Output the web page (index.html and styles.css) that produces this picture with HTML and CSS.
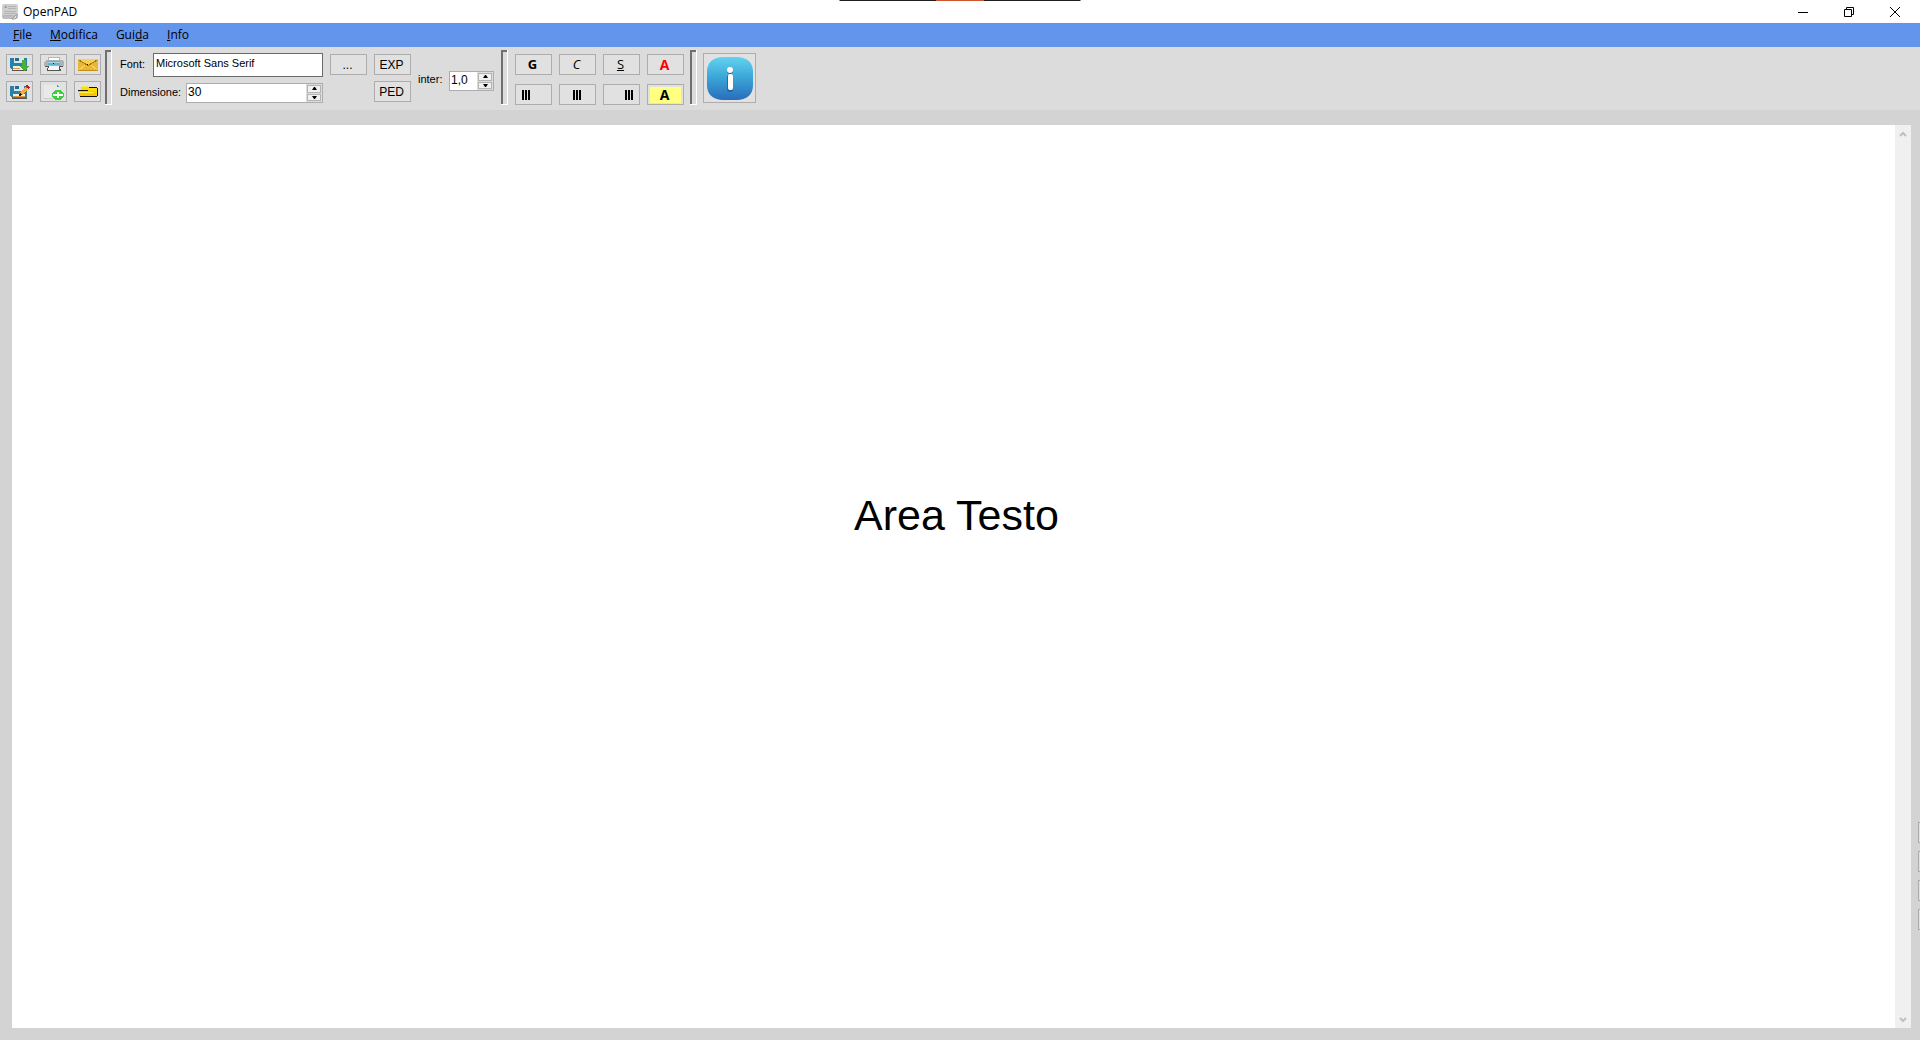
FILE: index.html
```html
<!DOCTYPE html>
<html lang="it">
<head>
<meta charset="utf-8">
<title>OpenPAD</title>
<link rel="stylesheet" href="styles.css">
</head>
<body>
<div class="dock-strip"></div>
<header class="titlebar">
  <svg class="app-icon" viewBox="0 0 16 16"><rect x="0" y="0" width="16" height="15" rx="2" fill="#cfcfcf"/><path d="M0 11h16v2l-2 2H2l-2-2z" fill="#bdbdbd"/><path d="M6 2.500h8M6 4.500h8M2 7.500h12M2 9.500h12M2 11.500h8" stroke="#b4b4b4"/><path d="M2 4l2-3 1 3z" fill="#c98888"/><path d="M10 15l5-5v3l-2 2z" fill="#e2e2e2" stroke="#999"/></svg>
  <h1 class="title">OpenPAD</h1>
  <div class="window-controls">
    <button class="win-btn" aria-label="Riduci a icona"><svg width="10" height="10"><path d="M0 5.500h10" stroke="#000"/></svg></button>
    <button class="win-btn" aria-label="Ripristina"><svg width="10" height="10"><path d="M.5 2.500h7v7h-7zM2.500 2.500v-2h7v7h-2" fill="none" stroke="#000"/></svg></button>
    <button class="win-btn" aria-label="Chiudi"><svg width="10" height="10"><path d="M0 0l10 10M10 0L0 10" stroke="#000"/></svg></button>
  </div>
</header>
<nav class="menubar">
  <a href="#file"><u>F</u>ile</a>
  <a href="#modifica"><u>M</u>odifica</a>
  <a href="#guida">Gui<u>d</u>a</a>
  <a href="#info"><u>I</u>nfo</a>
</nav>
<div class="toolbar">
  <div class="icon-grid">
    <button class="btn" aria-label="Salva"><svg width="19" height="15"><path d="M0 1h17v12H2l-2-2z" fill="#2583ab"/><path d="M4 1h10v5H4z" fill="#d8e5e9"/><path d="M5 1h4v3H5z" fill="#246b91"/><path d="M3 9h12v4H3z" fill="#f2efea"/><path d="M3 11h7v1H3z" fill="#e8953a"/><path d="M2 13h15v1H2z" fill="#555"/><path d="M12 3h4v6h3l-5 5-5-5h3z" fill="#4fae35"/></svg></button>
    <button class="btn" aria-label="Stampa"><svg width="20" height="15"><path d="M5 1h10v3H5z" fill="#fff"/><path d="M4 0h1v4H4zM15 0h1v4h-1zM5 0h10v1H5z" fill="#b5b5b5"/><path d="M0 5l2-2h16l2 2v4H0z" fill="#aeb3b6"/><path d="M4 4h12v4H4z" fill="#62b4d1"/><path d="M4 5h12v1H4z" fill="#a0dae9"/><path d="M1 9h18v1H1z" fill="#555"/><path d="M4 9h12l1 5H3z" fill="#555"/><path d="M5 9h10v4H4z" fill="#f7f7f7"/><path d="M9 6h1v1H9z" fill="#111"/></svg></button>
    <button class="btn" aria-label="Invia per posta"><svg width="20" height="12"><path d="M0 0h20v12H0z" fill="#e9b831"/><path d="M0 0h20L10 7z" fill="#f5cf56"/><path d="M1 1l8 5h2l8-5" fill="none" stroke="#a8740c"/><path d="M1 11l6-5M19 11l-6-5" stroke="#f8d569"/><path d="M9 5h1v1H9z" fill="#111"/><path d="M0 11h20v1H0z" fill="#c58e19"/></svg></button>
    <button class="btn" aria-label="Salva con nome"><svg width="20" height="15"><path d="M0 2h17v12H2l-2-2z" fill="#2583ab"/><path d="M4 2h10v5H4z" fill="#d8e5e9"/><path d="M5 2h4v3H5z" fill="#246b91"/><path d="M3 10h12v3H3z" fill="#f2efea"/><path d="M3 12h12v1H3z" fill="#e8953a"/><path d="M2 14h15v1H2z" fill="#555"/><path d="M9 12l1-4 5-5 3 3-6 5z" fill="#f0ad4e"/><path d="M15 2l2-1 3 2-2 2z" fill="#b9191b"/><path d="M9 12l1-3 2 2z" fill="#222"/></svg></button>
    <button class="btn" aria-label="Nuovo"><svg width="20" height="16"><path d="M0 1h13l3 2v11H0z" fill="#e9e9e9"/><path d="M13 1l3 2h-3z" fill="#4c9aa8"/><path d="M0 14h13v1H0z" fill="#ccc"/><ellipse cx="14" cy="11" rx="6" ry="5" fill="#3bcf38"/><path d="M13 8h2v2h4v2h-4v2h-2v-2H9v-2h4z" fill="#fff"/></svg></button>
    <button class="btn" aria-label="Apri"><svg width="20" height="13"><path d="M3 1h6l2 2h8v8H1V6h2z" fill="#ffdc00"/><path d="M0 6h17l2 5H2z" fill="#ffc400"/><path d="M3 1h6v1H3zM1 7h15v1H1z" fill="#fff04a"/><path d="M11 2h8v1h-8zM0 5h10v1H0zM2 11h17v1H2zM19 3h1v8h-1z" fill="#181200"/></svg></button>
  </div>
  <div class="separator"></div>
  <div class="font-fields">
    <div class="field"><label for="font">Font:</label><input class="font-name" id="font" type="text" value="Microsoft Sans Serif"></div>
    <div class="field"><label for="size">Dimensione:</label>
      <div class="spinner size-spinner"><input id="size" type="text" value="30"><div class="steps"><button aria-label="Aumenta dimensione"><svg width="5" height="3"><path d="M0 3l2-3h1l2 3z"/></svg></button><button aria-label="Riduci dimensione"><svg width="5" height="3"><path d="M0 0h5L3 3H2z"/></svg></button></div></div>
    </div>
  </div>
  <button class="btn wide browse">...</button>
  <div class="script-grid"><button class="btn wide">EXP</button><button class="btn wide">PED</button></div>
  <div class="spacing">
    <label for="inter">inter:</label>
    <div class="spinner"><input id="inter" type="text" value="1,0"><div class="steps"><button aria-label="Aumenta interlinea"><svg width="5" height="3"><path d="M0 3l2-3h1l2 3z"/></svg></button><button aria-label="Riduci interlinea"><svg width="5" height="3"><path d="M0 0h5L3 3H2z"/></svg></button></div></div>
  </div>
  <div class="separator"></div>
  <div class="format-grid">
    <button class="btn wide bold">G</button>
    <button class="btn wide italic">C</button>
    <button class="btn wide underline">S</button>
    <button class="btn wide color">A</button>
    <button class="btn wide left" aria-label="Allinea a sinistra"><svg class="bars" width="8" height="10"><path d="M0 0h2v10H0zM3 0h2v10H3zM6 0h2v10H6z"/></svg></button>
    <button class="btn wide center" aria-label="Centra"><svg class="bars" width="8" height="10"><path d="M0 0h2v10H0zM3 0h2v10H3zM6 0h2v10H6z"/></svg></button>
    <button class="btn wide right" aria-label="Allinea a destra"><svg class="bars" width="8" height="10"><path d="M0 0h2v10H0zM3 0h2v10H3zM6 0h2v10H6z"/></svg></button>
    <button class="btn wide highlight"><span>A</span></button>
  </div>
  <div class="separator"></div>
  <button class="btn info" aria-label="Informazioni"><svg width="46" height="43" viewBox="0 0 46 43"><defs><linearGradient id="blue" x1="0" y1="0" x2="0" y2="1"><stop offset="0" stop-color="#62d3ef"/><stop offset=".5" stop-color="#3aa3d6"/><stop offset="1" stop-color="#2a6dbb"/></linearGradient></defs><path d="M15 0h16C41 1 46 6 46 15v13c0 9-5 14-15 15H15C5 42 0 37 0 28V15C0 6 5 1 15 0z" fill="url(#blue)"/><circle cx="23" cy="14" r="3" fill="#1c62ad"/><circle cx="23" cy="13" r="3" fill="#fff"/><rect x="20" y="18" width="6" height="17" rx="2" fill="#2467b1"/><rect x="21" y="17" width="5" height="16" rx="2" fill="#fff"/></svg></button>
</div>
<main class="workspace">
  <div class="editor">
    <div class="page"><textarea rows="1" aria-label="Testo">Area Testo</textarea></div>
    <div class="scrollbar">
      <button aria-label="Scorri su"><svg width="8" height="6"><path d="M1 5l3-3 3 3" fill="none" stroke="#bfbfbf" stroke-width="2"/></svg></button>
      <button aria-label="Scorri giù"><svg width="8" height="6"><path d="M1 1l3 3 3-3" fill="none" stroke="#bfbfbf" stroke-width="2"/></svg></button>
    </div>
  </div>
  <aside class="side-panel"><button class="btn wide" aria-label="Pannello 1"></button><button class="btn wide" aria-label="Pannello 2"></button><button class="btn wide" aria-label="Pannello 3"></button><button class="btn wide" aria-label="Pannello 4"></button></aside>
</main>
</body>
</html>
```
FILE: styles.css
```css
* { box-sizing: border-box; }
body {
  margin: 0;
  min-height: 100vh;
  display: flex;
  flex-direction: column;
  background: #d3d3d3;
  color: #000;
  font: 11px/14px "Liberation Sans", Arial, sans-serif;
}
button, input, textarea { font: inherit; color: inherit; margin: 0; padding: 0; border: 0; border-radius: 0; background: none; }
svg { display: block; flex: none; }

.dock-strip {
  position: absolute;
  top: 0;
  left: 50%;
  width: 241px;
  height: 1px;
  transform: translateX(-50%);
  background: linear-gradient(90deg, #1f1f1f 40%, #cc5529 40% 60%, #1f1f1f 60%);
}
.titlebar { display: flex; align-items: center; height: 23px; padding: 0 2px; background: #fff; }
.app-icon { width: 16px; height: 16px; }
.title { flex: 1; margin: 0 0 0 5px; font: 400 12px/16px "Open Sans", "Noto Sans", sans-serif; }
.window-controls { display: flex; }
.win-btn { display: flex; align-items: center; justify-content: center; width: 46px; height: 20px; }

.menubar { display: flex; align-items: center; gap: 18px; height: 24px; padding: 0 13px; background: #6495ed; font: 12px/16px "Open Sans", "Noto Sans", sans-serif; }
.menubar a { color: #000; text-decoration: none; }

.toolbar { display: flex; align-items: flex-start; height: 63px; padding: 3px 6px; background: #dcdcdc; }
.btn { display: flex; align-items: center; justify-content: center; width: 27px; height: 21px; border: 1px solid #adadad; background: #e1e1e1; }
.wide { width: 37px; padding-right: 2px; font-size: 12px; }
.icon-grid { display: grid; grid-template-columns: repeat(3, 27px); gap: 6px 7px; padding-top: 4px; }
.icon-grid svg { shape-rendering: crispEdges; }
.separator { width: 7px; height: 55px; margin-left: 4px; border: 1px solid #fff; border-width: 0 1px 1px 0; box-shadow: inset 2px 2px #707070; }

.font-fields { display: flex; flex-direction: column; gap: 6px; width: 203px; margin-left: 8px; padding-top: 3px; }
.field { display: flex; align-items: center; justify-content: space-between; }
.field label { padding-bottom: 2px; }
.font-name { width: 170px; height: 24px; padding: 0 2px 5px; border: 1px solid #6a6a6a; background: #fff; }
.spinner { display: flex; width: 45px; height: 20px; border: 1px solid #abadb3; background: #fff; }
.spinner input { flex: 1; min-width: 0; padding: 0 1px 2px; font-size: 12px; }
.size-spinner { width: 137px; }
.steps { display: flex; flex-direction: column; gap: 1px; width: 16px; padding: 1px; background: #dcdcdc; }
.steps button { flex: 1; display: flex; align-items: center; justify-content: center; border: 1px solid #b4b4b4; background: #f0f0f0; }

.browse { margin: 4px 0 0 7px; }
.script-grid { display: grid; gap: 6px; margin-left: 7px; padding-top: 4px; }
.spacing { display: flex; align-items: center; justify-content: space-between; width: 76px; margin: 21px 3px 0 7px; }
.spacing label { padding-bottom: 4px; }
.format-grid { display: grid; grid-template-columns: repeat(4, 37px); gap: 9px 7px; margin: 4px 2px 0 7px; }
.bold, .italic, .underline { padding-bottom: 1px; }
.bold { font: 700 13px/16px "Open Sans", sans-serif; }
.italic { font: italic 13px/16px "Open Sans", sans-serif; }
.underline { font: 13px/16px "Open Sans", sans-serif; text-decoration: underline; }
.color { color: #f00; font: 700 14px/16px "Open Sans", sans-serif; }
.left { justify-content: flex-start; padding: 0 0 0 6px; }
.right { justify-content: flex-end; padding: 0 6px 0 0; }
.highlight { padding: 0; font: 700 14px/16px "Open Sans", sans-serif; }
.highlight span { width: 31px; padding-right: 2px; background: #ffff80; }
.info { width: 53px; height: 50px; margin: 3px 0 0 6px; }

.workspace { flex: 1; display: flex; gap: 7px; padding: 15px 0 12px 12px; }
.editor { flex: 1; display: flex; background: #fff; }
.page { flex: 1; display: flex; align-items: center; padding: 0 0 124px 6px; }
.page textarea { width: 100%; height: 48px; overflow: hidden; resize: none; outline: 0; text-align: center; font-size: 43px; line-height: 48px; }
.scrollbar { display: flex; flex-direction: column; justify-content: space-between; width: 16px; background: #f0f0f0; }
.scrollbar button { display: flex; align-items: center; justify-content: center; height: 17px; }
.side-panel { display: flex; flex-direction: column; justify-content: flex-end; gap: 8px; width: 2px; padding-bottom: 98px; overflow: hidden; }
```
